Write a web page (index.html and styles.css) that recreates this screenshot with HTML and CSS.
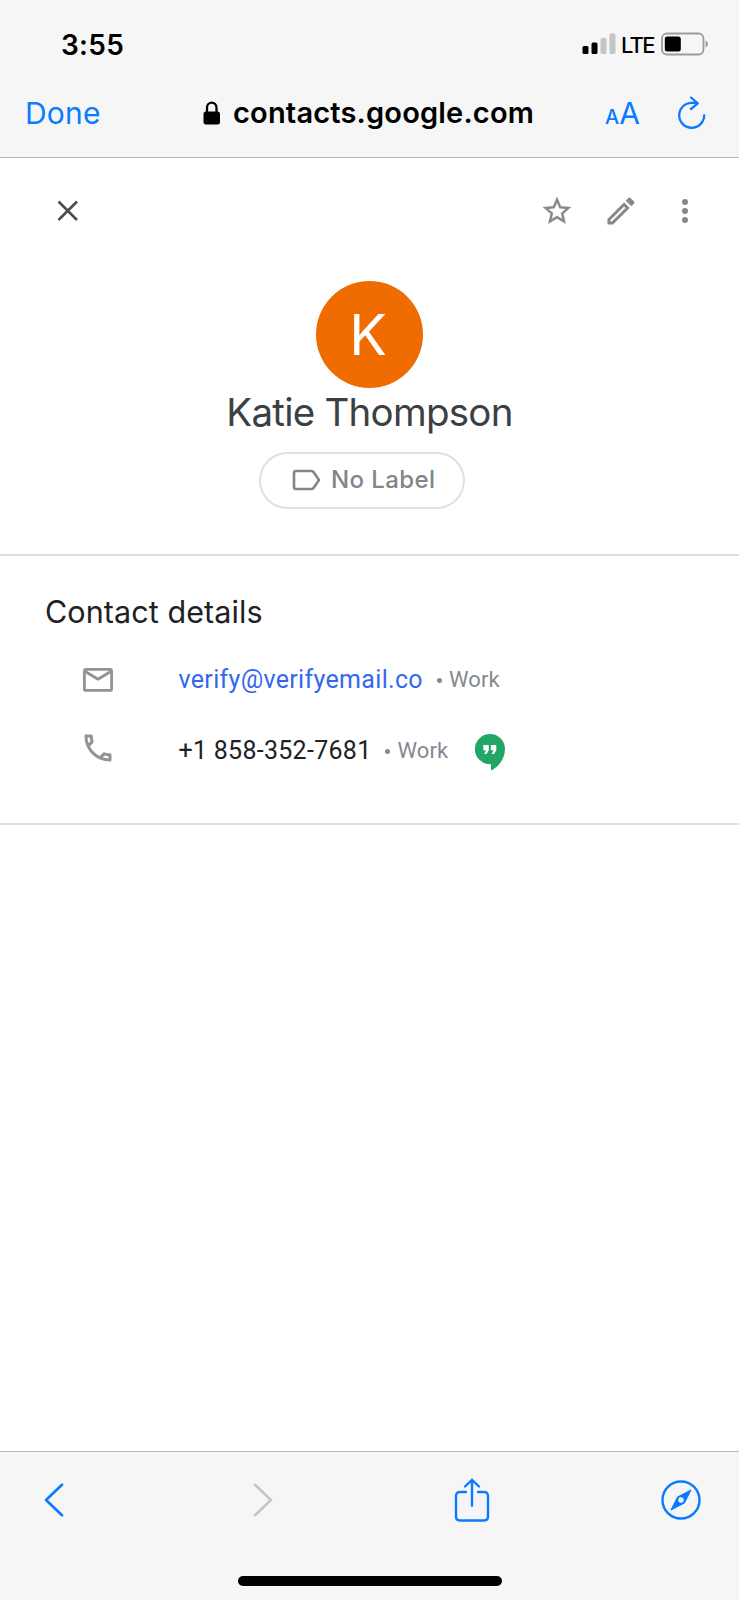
FILE: index.html
```
<!DOCTYPE html>
<html lang="en">
<head>
<meta charset="utf-8">
<title>Katie Thompson</title>
<link rel="stylesheet" href="styles.css">
</head>
<body>
<div class="screen">
  <header class="browser-top">
    <div class="status">
      <span class="time">3:55</span>
      <svg class="signal" width="34" height="22" viewBox="0 0 34 22"><rect x="0.5" y="13" width="6" height="8" rx="1.5"/><rect x="9.5" y="9.500" width="6" height="11.5" rx="1.5"/><g fill="#c4c4c4"><rect x="18.500" y="5" width="6" height="16" rx="1.5"/><rect x="27.500" y="0.500" width="6" height="20.500" rx="1.500"/></g></svg>
      <span class="carrier">LTE</span>
      <svg class="battery" width="48" height="24" viewBox="0 0 48 24"><rect x="1" y="1.500" width="41.500" height="21" rx="5" fill="none" stroke="#9c9c9c" stroke-width="1.800"/><rect x="3.800" y="4.500" width="16" height="15" rx="2.500"/><path d="M44.500 8.500q2.500 1.200 2.500 3.500t-2.500 3.500z" fill="#9c9c9c"/></svg>
    </div>
    <div class="address">
      <a class="done">Done</a>
      <svg class="lock" width="18" height="24" viewBox="0 0 18 24"><rect x="0.500" y="10.500" width="16.500" height="13" rx="2.500"/><path d="M4 11V6.500a4.750 4.900 0 0 1 9.500 0V11" fill="none" stroke="#000" stroke-width="2.300"/></svg>
      <span class="url">contacts.google.com</span>
      <span class="text-size"><span class="small-a">A</span><span class="big-a">A</span></span>
      <svg class="reload" width="30" height="34" viewBox="0 0 30 34" fill="none" stroke="#0a7aff" stroke-width="2.300" stroke-linecap="round" stroke-linejoin="round"><path d="M27.200 19.300A12.500 12.500 0 1 1 14.700 6.800H20.500M14 1.500l6.700 5.900-6.700 5.600"/></svg>
    </div>
  </header>

  <main class="page">
    <div class="actions">
      <svg class="close" width="22" height="22" viewBox="0 0 22 22" stroke="#4c4d50" stroke-width="2.600"><path d="M1.500 1.500l18.500 18.500M20 1.500L1.500 20"/></svg>
      <svg class="star" width="34" height="34" viewBox="0 0 24 24" fill="#87888a" stroke="#87888a" stroke-width=".15"><path d="M22 9.240l-7.190-.62L12 2 9.190 8.630 2 9.240l5.460 4.730L5.820 21 12 17.270 18.180 21l-1.630-7.030L22 9.240zM12 15.400l-3.760 2.270 1-4.280-3.320-2.880 4.380-.38L12 6.100l1.710 4.040 4.380.38-3.320 2.880 1 4.280L12 15.400z"/></svg>
      <svg class="pencil" width="36" height="36" viewBox="0 0 24 24" fill="#87888a"><path fill-rule="evenodd" d="M3 17.250V21h3.750L17.810 9.940l-3.750-3.750L3 17.250zM5.920 19H5v-.92l9.060-9.060.92.920L5.920 19zM20.710 7.040a1 1 0 0 0 0-1.410l-2.340-2.340a1 1 0 0 0-1.410 0l-1.830 1.830 3.750 3.750 1.830-1.830z"/></svg>
      <svg class="more" width="8" height="26" viewBox="0 0 8 26" fill="#87888a"><circle cx="4" cy="4" r="3"/><circle cx="4" cy="13" r="3"/><circle cx="4" cy="22" r="3"/></svg>
    </div>
    <section class="profile">
      <div class="avatar">K</div>
      <h1 class="name">Katie Thompson</h1>
      <div class="chip">
        <svg width="30" height="22" viewBox="0 0 30 22" fill="none" stroke="#80868b" stroke-width="2.600" stroke-linejoin="round"><path d="M4 2h15.500q1.300 0 2 1l5.500 8-5.500 8q-.7 1-2 1H4q-2 0-2-2V4q0-2 2-2z"/></svg>
        <span class="chip-text">No Label</span>
      </div>
    </section>
    <section class="details">
      <h2 class="heading">Contact details</h2>
      <div class="row">
        <svg class="row-icon" width="32" height="26" viewBox="0 0 32 26" fill="none" stroke="#929395" stroke-width="2.800" stroke-linejoin="round"><rect x="2.400" y="2.400" width="27.200" height="21" rx="1.500"/><path d="M2.500 4L16 12.200 29.500 4"/></svg>
        <a class="email">verify@verifyemail.co</a><i class="dot"></i><span class="kind">Work</span>
      </div>
      <div class="row">
        <svg class="row-icon phone-icon" width="36" height="36" viewBox="0 0 24 24" fill="#929395"><path d="M6.540 5c.06.890.21 1.760.45 2.590l-1.200 1.200c-.41-1.200-.67-2.470-.76-3.790h1.510m9.860 12.020c.85.240 1.720.390 2.600.450v1.490c-1.320-.09-2.590-.35-3.800-.75l1.200-1.190M7.500 3H4c-.55 0-1 .45-1 1 0 9.390 7.610 17 17 17 .55 0 1-.45 1-1v-3.490c0-.55-.45-1-1-1-1.240 0-2.450-.2-3.570-.57-.1-.04-.21-.05-.31-.05-.26 0-.51.100-.71.290l-2.200 2.200c-2.830-1.450-5.150-3.760-6.590-6.590l2.200-2.200c.28-.28.36-.67.250-1.020C8.700 6.450 8.500 5.250 8.500 4c0-.55-.45-1-1-1z"/></svg>
        <span class="phone">+1 858-352-7681</span><i class="dot"></i><span class="kind">Work</span>
        <svg class="hangouts" width="30" height="37" viewBox="0 0 30 37"><path d="M15 0a15 15 0 0 0 0 30.200h1V36.500C24 33 30 24 30 15A15 15 0 0 0 15 0z" fill="#22a565"/><path d="M8.300 11h5.500v5.200l-2.300 3.800H9.200l1.800-3.700H8.300zM15.800 11h5.500v5.200L19 20h-2.300l1.800-3.700h-2.700z" fill="#fff"/></svg>
      </div>
    </section>
  </main>

  <footer class="browser-bottom">
    <nav class="tools">
      <svg width="40" height="34" viewBox="0 0 20 34" fill="none" stroke="#0a7aff" stroke-width="2.600" stroke-linecap="round" stroke-linejoin="round"><path d="M18 1.700L2 17l16 15.300"/></svg>
      <svg width="40" height="34" viewBox="0 0 20 34" fill="none" stroke="#c6c6c6" stroke-width="2.600" stroke-linecap="round" stroke-linejoin="round"><path d="M2 1.700L18 17 2 32.300"/></svg>
      <svg width="40" height="44" viewBox="0 0 36 44" fill="none" stroke="#0a7aff" stroke-width="2.400" stroke-linecap="round" stroke-linejoin="round"><path d="M12 14H6q-4 0-4 4v20.500q0 4 4 4h24q4 0 4-4V18q0-4-4-4h-6M18 27.500V1.800M11 8.500l7-6.700 7 6.700"/></svg>
      <svg width="40" height="40" viewBox="0 0 40 40"><circle cx="20" cy="20" r="18.500" fill="none" stroke="#0a7aff" stroke-width="2.400"/><path d="M30 10l-6.500 13L10 30l6.500-13z" fill="#0a7aff" stroke="#0a7aff" stroke-linejoin="round"/><circle cx="20" cy="20" r="2.700" fill="#f6f6f6"/></svg>
    </nav>
    <div class="home-bar"></div>
  </footer>
</div>
</body>
</html>
```
FILE: styles.css
```
* { box-sizing: border-box; }
body { margin: 0; background: #fff; font-family: Inter, "Liberation Sans", sans-serif; }
svg { display: block; flex: none; }
span, a, h1, h2 { white-space: nowrap; flex: none; }
.screen { width: 739px; height: 1600px; display: flex; flex-direction: column; }

.browser-top { height: 158px; background: #f6f6f6; border-bottom: 1px solid #b4b4b4; }
.status { height: 88px; padding-left: 61px; display: flex; align-items: center; }
.time { width: 521px; margin-top: 2px; font-size: 28px; font-weight: 600; letter-spacing: 0.3px; line-height: 34px; }
.carrier { width: 34px; margin-left: 5px; font-size: 22px; font-weight: 500; letter-spacing: -1.8px; line-height: 28px; margin-top: 2px; }
.battery { margin-left: 6px; }
.address { height: 69px; padding-left: 25px; display: flex; align-items: flex-start; }
.done { width: 178px; margin-top: 7px; font-size: 30px; line-height: 36px; letter-spacing: 0.2px; color: #0a7aff; }
.lock { margin-top: 13px; }
.url { width: 384px; margin-top: 7px; padding-left: 12px; font-size: 29px; font-weight: 600; line-height: 36px; letter-spacing: 0.18px; }
.text-size { width: 72px; margin-top: 7px; color: #0a7aff; line-height: 36px; font-weight: 500; }
.small-a { font-size: 20px; }
.big-a { font-size: 30px; font-weight: 400; }
.reload { margin-top: 8px; }

.page { flex: 1; }
.actions { height: 105px; padding-left: 57px; display: flex; align-items: center; }
.star { margin-left: 460.5px; }
.pencil { margin-left: 29.5px; }
.more { margin-left: 42px; }
.profile { height: 293px; padding-top: 17.5px; border-bottom: 2px solid #dfdfdf; display: flex; flex-direction: column; align-items: center; }
.avatar { width: 107px; height: 107px; border-radius: 50%; background: #ef6c00; color: #fff; font-size: 56px; line-height: 109px; text-align: center; padding-right: 3px; }
.name { margin: 0; height: 64px; font-size: 38.5px; font-weight: 400; line-height: 48px; color: #3c4043; letter-spacing: -0.75px; }
.chip { width: 206px; height: 57px; margin-right: 15px; border: 2px solid #dfe0e2; border-radius: 29px; padding-left: 30.5px; display: flex; align-items: center; }
.chip-text { margin-left: 9.5px; font-size: 24px; font-weight: 500; color: #80868b; letter-spacing: 0.4px; line-height: 30px; }
.details { height: 269px; padding: 35px 0 0 45px; border-bottom: 2px solid #dfdfdf; }
.heading { margin: 0 0 11.5px; font-size: 30.5px; font-weight: 400; line-height: 42px; color: #202124; letter-spacing: 0.08px; }
.row { height: 71px; padding-left: 37px; display: flex; align-items: center; font-family: Roboto, "Liberation Sans", sans-serif; }
.row-icon { margin-right: 64.500px; }
.phone-icon { margin: -7px 62.5px 0 -2px; }
.email, .phone { font-size: 25px; letter-spacing: 0.32px; line-height: 32px; }
.email { color: #3367f0; }
.phone { color: #202124; letter-spacing: 0.28px; }
.dot { width: 5px; height: 5px; border-radius: 50%; background: #85898d; margin: 0 7px 0 14px; }
.kind { font-size: 22px; color: #85898d; letter-spacing: 0.1px; line-height: 28px; }
.hangouts { margin-left: 27px; margin-top: 2px; }

.browser-bottom { height: 149px; background: #f6f6f6; border-top: 1px solid #b9bbbb; display: flex; flex-direction: column; align-items: center; }
.tools { width: 667px; height: 96px; margin-right: 4px; display: flex; justify-content: space-between; align-items: center; }
.home-bar { width: 264px; height: 10px; margin-top: 28px; border-radius: 5px; background: #000; }
```
